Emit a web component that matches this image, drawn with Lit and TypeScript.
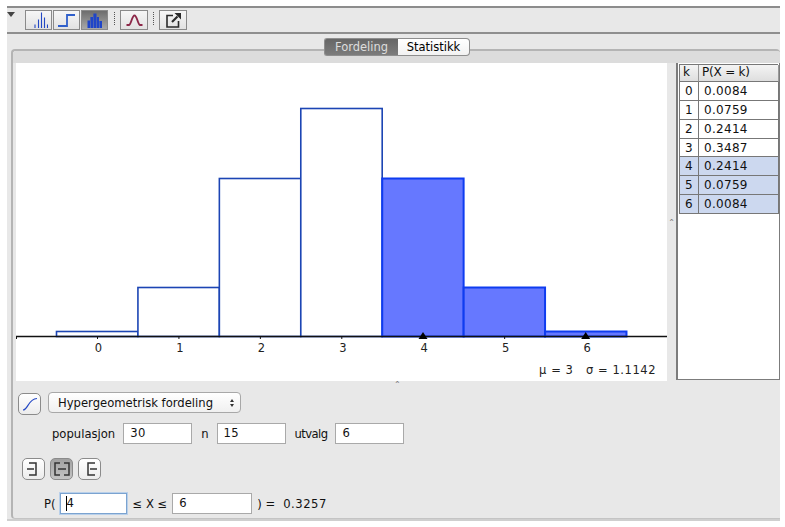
import { LitElement, html, css, svg } from 'lit';
import { customElement } from 'lit/decorators.js';

const PROBS = ['0.0084', '0.0759', '0.2414', '0.3487', '0.2414', '0.0759', '0.0084'];
const TOPS = [331, 287, 178, 108, 178, 287, 331];
const BASE = 336;
const PLOT_X = 16;
const PLOT_Y = 63;

@customElement('app-root')
export class AppRoot extends LitElement {
  static styles = css`
    :host {
      display: block;
      width: 785px;
      height: 527px;
      background: #fff;
      font-family: 'DejaVu Sans', sans-serif;
      font-size: 11.6px;
      color: #111;
      overflow: hidden;
    }
    .frame {
      margin: 6px 5px 0 7px;
      height: 515px;
      box-sizing: border-box;
      background: #e8e8e8;
      border-top: 2px solid #8c8c8c;
      border-bottom: 2px solid #cfcfcf;
      display: flex;
      flex-direction: column;
    }
    .toolbar {
      height: 22px;
      flex: none;
      border-bottom: 2px solid #8f8f8f;
      display: flex;
      align-items: flex-start;
      padding-top: 2px;
    }
    .menu-arrow {
      width: 0;
      height: 0;
      border-left: 4.5px solid transparent;
      border-right: 4.5px solid transparent;
      border-top: 5px solid #444;
      margin-top: 2px;
    }
    .tool-group {
      display: flex;
      margin-left: 10px;
    }
    .tool {
      width: 27px;
      height: 20px;
      box-sizing: border-box;
      border: 1px solid #8a8a8a;
      background: linear-gradient(#f6f6f6, #e2e2e2);
      display: flex;
      align-items: center;
      justify-content: center;
      margin-right: 1px;
    }
    .tool.on {
      background: linear-gradient(#6d6d6d, #a8a8a8);
    }
    .sep {
      width: 0;
      height: 13px;
      border-left: 1px dotted #555;
      margin: 2px 5px 0 5px;
    }
    .tool.single {
      width: 28px;
      margin: 0;
    }
    .content {
      flex: 1;
      padding: 4px 0 0 4px;
      display: flex;
      flex-direction: column;
      align-items: stretch;
    }
    .tabs {
      display: flex;
      justify-content: center;
      height: 18px;
      margin-bottom: -7px;
      position: relative;
      z-index: 1;
      padding-left: 3px;
    }
    .tab {
      height: 18px;
      box-sizing: border-box;
      display: flex;
      align-items: center;
      justify-content: center;
      font-size: 11.5px;
      border: 1px solid #8e8e8e;
    }
    .tab.active {
      width: 74px;
      background: linear-gradient(#666, #7c7c7c);
      color: #ddd;
      border-radius: 3px 0 0 3px;
      border-right: none;
    }
    .tab.idle {
      width: 72px;
      background: linear-gradient(#fff, #f2f2f2);
      color: #000;
      border-radius: 0 4px 4px 0;
      border-left: none;
    }
    .panel {
      flex: 1;
      width: 769px;
      box-sizing: border-box;
      border-top: 2px solid #b4b4b4;
      border-left: 2px solid #b4b4b4;
      border-bottom: 1px solid #c4c4c4;
      border-radius: 4px 4px 0 4px;
      background: #e8e8e8;
      display: flex;
      flex-direction: column;
    }
    .panel-head {
      height: 12px;
      background: #dcdcdc;
      border-radius: 3px 3px 0 0;
      flex: none;
    }
    .upper {
      display: flex;
      height: 318px;
      flex: none;
      padding-left: 3px;
    }
    .plot {
      width: 651px;
      height: 318px;
      flex: none;
      background: #fff;
    }
    .plot svg {
      display: block;
    }
    .divider {
      width: 9px;
      flex: none;
      display: flex;
      align-items: center;
      justify-content: center;
      color: #777;
      font-size: 8px;
    }
    .table-pane {
      width: 104px;
      height: 317px;
      flex: none;
      box-sizing: border-box;
      background: #fff;
      border-left: 2px solid #7c7c7c;
      border-right: 1px solid #7c7c7c;
      border-bottom: 1px solid #7c7c7c;
      padding: 1px 1px 0 1px;
    }
    .table {
      display: grid;
      grid-template-columns: 19px 80px;
      border-top: 1px solid #777;
      border-left: 1px solid #777;
      font-size: 12px;
    }
    .hcell {
      height: 17px;
      line-height: 15px;
      background: linear-gradient(#f4f4f4, #dedede);
      padding-left: 3px;
      box-sizing: border-box;
      border-right: 1px solid #999;
      border-bottom: 1px solid #777;
      letter-spacing: -0.2px;
    }
    .cell {
      height: 18.85px;
      line-height: 18px;
      box-sizing: border-box;
      padding-left: 5px;
      border-right: 1px solid #777;
      border-bottom: 1px solid #777;
      letter-spacing: 0.3px;
    }
    .cell.sel {
      background: #ccd8ef;
    }
    .controls {
      flex: 1;
      display: flex;
      flex-direction: column;
      padding: 11px 0 0 5px;
      position: relative;
    }
    .grip {
      position: absolute;
      top: 1px;
      left: 381px;
      font-size: 8px;
      color: #777;
      line-height: 6px;
    }
    .row {
      display: flex;
      align-items: center;
    }
    .top-row {
      align-items: flex-start;
    }
    .round-btn {
      width: 23px;
      height: 22px;
      box-sizing: border-box;
      border: 1px solid #8b8b8b;
      border-radius: 5px;
      background: linear-gradient(#fff, #ececec);
      display: flex;
      align-items: center;
      justify-content: center;
      flex: none;
    }
    .top-row .round-btn {
      margin-top: 1px;
    }
    .round-btn.on {
      background: linear-gradient(#a0a0a0, #c4c4c4);
    }
    .select {
      width: 193px;
      height: 21px;
      margin-left: 7px;
      box-sizing: border-box;
      border: 1px solid #a8a8a8;
      border-radius: 4px;
      background: linear-gradient(#fff, #f0f0f0);
      display: flex;
      align-items: center;
      justify-content: space-between;
      padding: 0 6px 0 9px;
    }
    .updown {
      display: flex;
      flex-direction: column;
      gap: 2px;
    }
    .updown i {
      display: block;
      width: 0;
      height: 0;
      border-left: 2.5px solid transparent;
      border-right: 2.5px solid transparent;
    }
    .updown i:first-child {
      border-bottom: 3px solid #333;
    }
    .updown i:last-child {
      border-top: 3px solid #333;
    }
    .params {
      margin-top: 8px;
      padding-left: 34px;
      height: 21px;
    }
    .field {
      height: 21px;
      flex: none;
      box-sizing: border-box;
      border: 1px solid #a9a9a9;
      background: #fff;
      padding-left: 6px;
      line-height: 19px;
      letter-spacing: 0.3px;
    }
    .w69 {
      width: 69px;
      margin-left: 8px;
    }
    .gap-n {
      margin-left: 9px;
    }
    .tight {
      letter-spacing: -0.6px;
    }
    .modes {
      margin-top: 14px;
      padding-left: 4px;
      gap: 5px;
    }
    .prob {
      margin-top: 13px;
      padding-left: 26px;
      height: 21px;
    }
    .field.focus {
      width: 67px;
      margin-left: 4px;
      border: 1px solid #7ba3d0;
      box-shadow: 0 0 0 1px #b9d0ea;
      position: relative;
    }
    .w80 {
      width: 80px;
    }
    .le {
      margin: 0 5px 0 6px;
    }
    .eq {
      margin-left: 5px;
    }
    .value {
      margin-left: 8px;
      letter-spacing: 0.5px;
    }
    .caret {
      position: absolute;
      left: 5px;
      top: 2px;
      width: 1px;
      height: 15px;
      background: #000;
    }
  `;

  private bars() {
    return TOPS.map((top, k) => {
      const x = 56.5 + k * 81.43;
      const sel = k >= 4;
      return svg`<rect x=${x - PLOT_X} y=${top - PLOT_Y + 0.5} width="81.4" height=${BASE - top}
        fill=${sel ? '#6678ff' : '#fff'} stroke=${sel ? '#0f3cf0' : '#1c45b4'} stroke-width=${sel ? 2 : 1.6}></rect>`;
    });
  }

  private axis() {
    const y = BASE - PLOT_Y;
    return svg`
      <line x1="0" y1=${y + 0.5} x2="651" y2=${y + 0.5} stroke="#111" stroke-width="1.3"></line>
      <line x1="0.5" y1=${y} x2="0.5" y2=${y + 3} stroke="#111"></line>
      ${PROBS.map((_, k) => {
        const x = 81.5 + k * 81.43;
        return svg`
          <line x1=${x} y1=${y} x2=${x} y2=${y + 3} stroke="#111"></line>
          <text x=${x + 1} y=${y + 16} font-size="11.5" text-anchor="middle" fill="#222"
            font-family="DejaVu Sans, sans-serif">${k}</text>`;
      })}
      <polygon points="407,269 402.5,276 411.5,276" fill="#000"></polygon>
      <polygon points="569.7,269 565.2,276 574.2,276" fill="#000"></polygon>
      <text x="640" y="311" text-anchor="end" font-size="11.5" fill="#222" letter-spacing="0.55"
        font-family="DejaVu Sans, sans-serif" style="white-space:pre">μ = 3   σ = 1.1142</text>`;
  }

  private bracket(d: string) {
    return html`<svg width="18" height="18" viewBox="0 0 18 18" fill="none" stroke="#333" stroke-width="1.5"><path d=${d}></path></svg>`;
  }

  render() {
    return html`
      <div class="frame">
        <div class="toolbar">
          <div class="menu-arrow"></div>
          <div class="tool-group">
            <div class="tool">
              <svg width="19" height="18" viewBox="0 0 19 18" fill="none" stroke="#2348c4" stroke-width="1.1">
                <path d="M6 17V13.5M9.5 17V8.5M12.5 17V1.5M15.5 17V6.5M18.5 17V13.5"></path>
              </svg>
            </div>
            <div class="tool">
              <svg width="19" height="14" viewBox="0 0 19 14" fill="none" stroke="#2f5fcb" stroke-width="1.8">
                <path d="M1 13H10V2H18"></path>
              </svg>
            </div>
            <div class="tool on">
              <svg width="15" height="15" viewBox="0 0 15 15" fill="#1f45c8">
                <path d="M0.5 7.5H3V15H0.5ZM3.4 4H6V15H3.4ZM6.4 0.5H9.5V15H6.4ZM9.9 4H12V15H9.9ZM12.4 8H15V15H12.4Z"></path>
              </svg>
            </div>
          </div>
          <div class="sep"></div>
          <div class="tool single">
            <svg width="17" height="12" viewBox="0 0 17 12" fill="none" stroke="#8c2748" stroke-width="1.8">
              <path d="M0.5 11H3C5 11 6 1.5 8.5 1.5S12 11 14 11H16.5"></path>
            </svg>
          </div>
          <div class="sep"></div>
          <div class="tool single">
            <svg width="17" height="16" viewBox="0 0 17 16" fill="none" stroke="#2a2a2a" stroke-width="1.6">
              <path d="M8 3.5H2V15H13.5V9"></path>
              <path d="M7 10L12.5 4.5" stroke-width="2.2"></path>
              <path d="M9.5 1H16V7.5Z" fill="#2a2a2a" stroke="none"></path>
            </svg>
          </div>
        </div>
        <div class="content">
          <div class="tabs">
            <div class="tab active">Fordeling</div>
            <div class="tab idle">Statistikk</div>
          </div>
          <div class="panel">
            <div class="panel-head"></div>
            <div class="upper">
              <div class="plot">
                <svg width="651" height="318" viewBox="0 0 651 318">${this.bars()}${this.axis()}</svg>
              </div>
              <div class="divider">⌃</div>
              <div class="table-pane">
                <div class="table">
                  <div class="hcell">k</div>
                  <div class="hcell">P(X = k)</div>
                  ${PROBS.map((p, k) => html`
                    <div class="cell ${k >= 4 ? 'sel' : ''}">${k}</div>
                    <div class="cell ${k >= 4 ? 'sel' : ''}">${p}</div>
                  `)}
                </div>
              </div>
            </div>
            <div class="controls">
              <div class="grip">⌃</div>
              <div class="row top-row">
                <div class="round-btn">
                  <svg width="16" height="14" viewBox="0 0 16 14" fill="none" stroke="#2347c4" stroke-width="1.2">
                    <path d="M1 13C6 13 6 2 15 1.5"></path>
                  </svg>
                </div>
                <div class="select">
                  <span>Hypergeometrisk fordeling</span>
                  <span class="updown"><i></i><i></i></span>
                </div>
              </div>
              <div class="row params">
                <span>populasjon</span>
                <div class="field w69">30</div>
                <span class="gap-n">n</span>
                <div class="field w69">15</div>
                <span class="gap-n tight">utvalg</span>
                <div class="field w69">6</div>
              </div>
              <div class="row modes">
                <div class="round-btn">${this.bracket('M4 3H11V15H4M2 9H9')}</div>
                <div class="round-btn on">${this.bracket('M7 3H2V15H7M11 3H16V15H11M5 9H13')}</div>
                <div class="round-btn">${this.bracket('M14 3H7V15H14M9 9H16')}</div>
              </div>
              <div class="row prob">
                <span>P(</span>
                <div class="field focus"><span class="caret"></span>4</div>
                <span class="le">≤ X ≤</span>
                <div class="field w80">6</div>
                <span class="eq">) =</span>
                <span class="value">0.3257</span>
              </div>
            </div>
          </div>
        </div>
      </div>
    `;
  }
}
